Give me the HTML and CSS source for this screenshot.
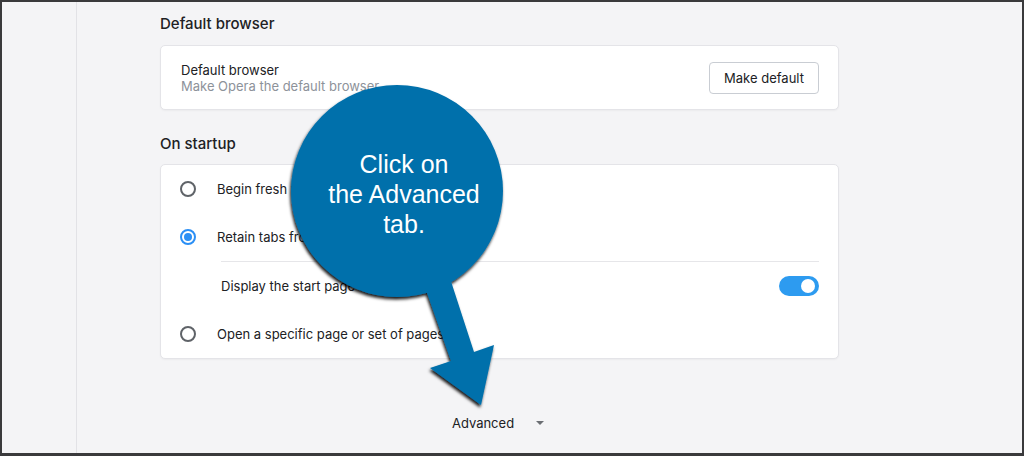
FILE: index.html
```html
<!DOCTYPE html>
<html lang="en">
<head>
<meta charset="utf-8">
<title>Settings</title>
<link rel="stylesheet" href="styles.css">
</head>
<body>
<div class="screen">
  <div class="frame">
    <aside class="sidebar"></aside>
    <main class="main">
      <h2 class="section-title">Default browser</h2>
      <section class="card card-default">
        <div class="text-block">
          <div class="label">Default browser</div>
          <div class="sublabel">Make Opera the default browser</div>
        </div>
        <button class="btn">Make default</button>
      </section>

      <h2 class="section-title title-startup">On startup</h2>
      <section class="card">
        <div class="row">
          <span class="radio"></span>
          <span class="label">Begin fresh with start page</span>
        </div>
        <div class="row">
          <span class="radio checked"></span>
          <span class="label">Retain tabs from previous session</span>
        </div>
        <div class="subrow">
          <span class="label">Display the start page first</span>
          <span class="toggle"><span class="knob"></span></span>
        </div>
        <div class="row">
          <span class="radio"></span>
          <span class="label">Open a specific page or set of pages</span>
        </div>
      </section>

      <div class="advanced">
        <span class="label">Advanced</span>
        <span class="caret"></span>
      </div>
    </main>
  </div>

  <div class="callout">
    <svg class="callout-shape" width="1024" height="456" viewBox="0 0 1024 456" aria-hidden="true">
      <defs>
        <filter id="shadow" x="-20%" y="-20%" width="140%" height="140%">
          <feDropShadow dx="-1" dy="2.5" stdDeviation="1.5" flood-color="#000" flood-opacity="0.9"/>
        </filter>
      </defs>
      <g filter="url(#shadow)" fill="#0470ab">
        <circle cx="397" cy="191" r="106"/>
        <polygon points="420,273 446,266 474,352 494,345 481,405 430,368 451,361"/>
      </g>
    </svg>
    <div class="callout-text">Click on<br>the Advanced<br>tab.</div>
  </div>
</div>
</body>
</html>
```

FILE: styles.css
```css
* {
  box-sizing: border-box;
}

html, body {
  margin: 0;
  padding: 0;
}

body {
  font-family: Inter, "Noto Sans", "Liberation Sans", sans-serif;
  color: #202124;
  background: #f4f4f6;
}

.screen {
  position: relative;
  width: 1024px;
  height: 456px;
  overflow: hidden;
}

.frame {
  width: 1024px;
  height: 456px;
  border: 2px solid #3a3a3c;
  border-bottom-width: 3px;
  background: #f4f4f6;
  display: flex;
}

.sidebar {
  width: 75px;
  flex: none;
  border-right: 1px solid #e2e2e6;
}

.main {
  flex: 1;
  padding: 12px 0 0 83px;
}

.section-title {
  margin: 0 0 11px;
  width: 679px;
  font-size: 15px;
  line-height: 20px;
  font-weight: 500;
  color: #202124;
}

.title-startup {
  margin-top: 24px;
  margin-bottom: 10px;
}

.card {
  width: 679px;
  background: #ffffff;
  border: 1px solid #e4e4e8;
  border-radius: 5px;
  box-shadow: 0 1px 2px rgba(0, 0, 0, 0.04);
}

.card-default {
  display: flex;
  align-items: center;
  justify-content: space-between;
  padding: 16px 19px 15px 20px;
}

.label {
  font-size: 13px;
  line-height: 16px;
  color: #202124;
}

.sublabel {
  font-size: 13px;
  line-height: 16px;
  color: #8d929a;
}

.btn {
  width: 110px;
  height: 32px;
  border: 1px solid #c9cdd3;
  border-radius: 4px;
  background: #ffffff;
  font-family: inherit;
  font-size: 13px;
  color: #202124;
  padding: 0;
}

.row {
  height: 48px;
  display: flex;
  align-items: center;
  gap: 21px;
  padding-left: 19px;
}

.radio {
  width: 16px;
  height: 16px;
  flex: none;
  border: 2px solid #5f6368;
  border-radius: 50%;
  display: flex;
  align-items: center;
  justify-content: center;
}

.radio.checked {
  border-color: #2b8ff5;
}

.radio.checked::after {
  content: "";
  width: 8px;
  height: 8px;
  border-radius: 50%;
  background: #2b8ff5;
}

.subrow {
  height: 49px;
  margin-left: 60px;
  margin-right: 19px;
  border-top: 1px solid #e6e6e9;
  display: flex;
  align-items: center;
  justify-content: space-between;
}

.toggle {
  width: 40px;
  height: 20px;
  border-radius: 10px;
  background: #2d9bf0;
  display: flex;
  align-items: center;
  justify-content: flex-end;
  padding-right: 4px;
}

.knob {
  width: 14px;
  height: 14px;
  border-radius: 50%;
  background: #ffffff;
}

.advanced {
  width: 679px;
  margin-top: 54px;
  height: 20px;
  display: flex;
  align-items: center;
  justify-content: center;
  gap: 22px;
  padding-right: 3px;
}

.advanced .label {
  line-height: 20px;
}

.caret {
  width: 0;
  height: 0;
  border-left: 4px solid transparent;
  border-right: 4px solid transparent;
  border-top: 4px solid #6b6e73;
}

.callout {
  position: absolute;
  left: 0;
  top: 0;
  width: 1024px;
  height: 456px;
  pointer-events: none;
}

.callout-shape {
  position: absolute;
  left: 0;
  top: 0;
}

.callout-text {
  position: absolute;
  left: 304px;
  top: 149px;
  width: 200px;
  text-align: center;
  font-family: "Liberation Sans", Arial, sans-serif;
  font-size: 25px;
  line-height: 30px;
  color: #ffffff;
}
```
